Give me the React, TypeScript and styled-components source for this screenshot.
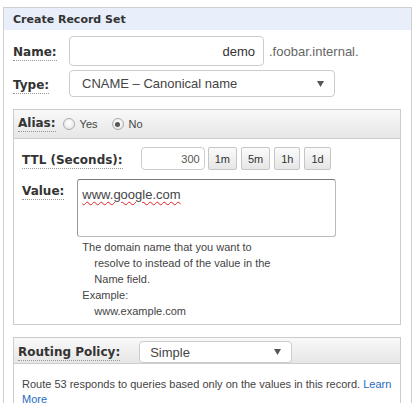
import React from "react";
import styled, { createGlobalStyle } from "styled-components";

const GlobalStyle = createGlobalStyle`
  html, body { margin: 0; padding: 0; background: #fff; }
  body { font-family: "Liberation Sans", Arial, sans-serif; color: #444; }
`;

const Page = styled.div`
  padding: 7px 6px 0 3px;
`;

const Panel = styled.section`
  border: 1px solid #d0d0d0;
  border-bottom: none;
  min-height: 400px;
`;

const PanelHeader = styled.header`
  height: 22px;
  display: flex;
  align-items: center;
  padding: 0 9px;
  background: #e8effa;
  font: bold 11px "DejaVu Sans", Verdana, sans-serif;
  color: #333;
`;

const PanelBody = styled.div`
  padding: 6px 10px 0 9px;
`;

const FieldRow = styled.div<{ $gap?: number; $top?: number; $align?: string }>`
  display: flex;
  align-items: ${(p) => p.$align || "center"};
  gap: ${(p) => p.$gap ?? 0}px;
  margin-top: ${(p) => p.$top ?? 0}px;
`;

const LabelCell = styled.div<{ $width?: number; $padTop?: number }>`
  width: ${(p) => (p.$width ? `${p.$width}px` : "auto")};
  padding-top: ${(p) => p.$padTop ?? 0}px;
  flex: none;
`;

const Label = styled.span`
  font: bold 12px "DejaVu Sans", Verdana, sans-serif;
  color: #333;
  border-bottom: 1px dotted #999;
  padding-bottom: 1px;
  white-space: nowrap;
`;

const NameInput = styled.div`
  box-sizing: border-box;
  width: 195px;
  height: 30px;
  border: 1px solid #ccc;
  border-radius: 4px;
  display: flex;
  align-items: center;
  justify-content: flex-end;
  padding-right: 8px;
  font-size: 13px;
  color: #333;
`;

const Suffix = styled.span`
  margin-left: 5px;
  font-size: 13px;
  color: #666;
`;

const SelectBox = styled.div<{ $width: number; $height: number; $pad: number }>`
  box-sizing: border-box;
  width: ${(p) => p.$width}px;
  height: ${(p) => p.$height}px;
  border: 1px solid #ccc;
  border-radius: 4px;
  background: #fff;
  display: flex;
  align-items: center;
  justify-content: space-between;
  padding: 0 10px 0 ${(p) => p.$pad}px;
  font-size: 13px;
  color: #444;
`;

const Arrow = () => (
  <svg width="7" height="6" viewBox="0 0 7 6">
    <path d="M0 0 H7 L3.5 6 Z" fill="#555" />
  </svg>
);

const SubBox = styled.div<{ $top: number }>`
  margin-top: ${(p) => p.$top}px;
  border: 1px solid #ccc;
`;

const SubHeader = styled.div<{ $height: number }>`
  height: ${(p) => p.$height}px;
  box-sizing: border-box;
  display: flex;
  align-items: center;
  padding-left: 4px;
  background: linear-gradient(#f9f9f9, #e6e6e6);
  border-bottom: 1px solid #ccc;
`;

const RoutingHeader = styled(SubHeader)`
  align-items: flex-end;
  gap: 19px;
  & > ${LabelCell} {
    align-self: center;
  }
`;

const RadioGroup = styled.label`
  display: flex;
  align-items: center;
  gap: 5px;
  font-size: 11px;
  color: #444;
  margin-left: 7px;
  & + & {
    margin-left: 14px;
  }
`;

const Radio = styled.span<{ $checked?: boolean }>`
  box-sizing: border-box;
  width: 12px;
  height: 12px;
  border-radius: 50%;
  border: 1px solid #aaa;
  background: radial-gradient(circle at 50% 40%, #fff, #e4e4e4);
  display: flex;
  align-items: center;
  justify-content: center;
  &::after {
    content: "";
    display: ${(p) => (p.$checked ? "block" : "none")};
    width: 5px;
    height: 5px;
    border-radius: 50%;
    background: #555;
  }
`;

const SubBody = styled.div`
  padding: 8px 8px 5px 8px;
`;

const TtlInput = styled.div`
  box-sizing: border-box;
  width: 64px;
  height: 23px;
  border: 1px solid #ccc;
  border-radius: 4px;
  display: flex;
  align-items: center;
  justify-content: flex-end;
  padding-right: 4px;
  font-size: 11px;
  color: #555;
`;

const ButtonGroup = styled.div`
  display: flex;
  gap: 4px;
  margin-left: 3px;
`;

const TtlButton = styled.button`
  box-sizing: border-box;
  height: 23px;
  padding: 0 6px;
  border: 1px solid #c6c6c6;
  border-radius: 2px;
  background: linear-gradient(#fbfbfb, #e6e6e6);
  font: 11px "Liberation Sans", Arial, sans-serif;
  color: #333;
`;

const ValueCol = styled.div`
  display: flex;
  flex-direction: column;
`;

const TextArea = styled.div`
  box-sizing: border-box;
  width: 259px;
  height: 58px;
  border: 1px solid #bbb;
  border-top-color: #777;
  border-left-color: #999;
  border-radius: 3px;
  padding: 7px 4px;
  font-size: 13px;
  color: #444;
`;

const Misspelled = styled.span`
  text-decoration: underline wavy #e02020;
  text-decoration-thickness: 1px;
  text-underline-offset: 2px;
`;

const HelpText = styled.div`
  width: 197px;
  margin: 2px 0 0 5px;
  font-size: 11px;
  line-height: 16px;
  color: #444;
`;

const HelpPara = styled.p<{ $indent?: boolean }>`
  margin: 0;
  padding-left: 12px;
  text-indent: ${(p) => (p.$indent ? "0" : "-12px")};
`;

const RoutingText = styled.p`
  margin: 0;
  padding: 13px 4px 0 8px;
  font-size: 11px;
  line-height: 15px;
  color: #444;
`;

const Link = styled.a`
  color: #1f6bbf;
  text-decoration: none;
`;

export default function App() {
  return (
    <>
      <GlobalStyle />
      <Page>
        <Panel>
          <PanelHeader>Create Record Set</PanelHeader>
          <PanelBody>
            <FieldRow>
              <LabelCell $width={56}>
                <Label>Name:</Label>
              </LabelCell>
              <NameInput>demo</NameInput>
              <Suffix>.foobar.internal.</Suffix>
            </FieldRow>
            <FieldRow $top={4}>
              <LabelCell $width={56}>
                <Label>Type:</Label>
              </LabelCell>
              <SelectBox $width={266} $height={27} $pad={12}>
                <span>CNAME – Canonical name</span>
                <Arrow />
              </SelectBox>
            </FieldRow>

            <SubBox $top={12}>
              <SubHeader $height={29}>
                <Label>Alias:</Label>
                <RadioGroup>
                  <Radio />
                  Yes
                </RadioGroup>
                <RadioGroup>
                  <Radio $checked />
                  No
                </RadioGroup>
              </SubHeader>
              <SubBody>
                <FieldRow $gap={18}>
                  <LabelCell>
                    <Label>TTL (Seconds):</Label>
                  </LabelCell>
                  <FieldRow>
                    <TtlInput>300</TtlInput>
                    <ButtonGroup>
                      <TtlButton>1m</TtlButton>
                      <TtlButton>5m</TtlButton>
                      <TtlButton>1h</TtlButton>
                      <TtlButton>1d</TtlButton>
                    </ButtonGroup>
                  </FieldRow>
                </FieldRow>
                <FieldRow $top={9} $gap={13} $align="flex-start">
                  <LabelCell $padTop={2}>
                    <Label>Value:</Label>
                  </LabelCell>
                  <ValueCol>
                    <TextArea>
                      <Misspelled>www.google.com</Misspelled>
                    </TextArea>
                    <HelpText>
                      <HelpPara>
                        The domain name that you want to resolve to instead of the value in the Name field.
                      </HelpPara>
                      <HelpPara>Example:</HelpPara>
                      <HelpPara $indent>www.example.com</HelpPara>
                    </HelpText>
                  </ValueCol>
                </FieldRow>
              </SubBody>
            </SubBox>

            <SubBox $top={12}>
              <RoutingHeader $height={26}>
                <LabelCell>
                  <Label>Routing Policy:</Label>
                </LabelCell>
                <SelectBox $width={153} $height={22} $pad={10}>
                  <span>Simple</span>
                  <Arrow />
                </SelectBox>
              </RoutingHeader>
              <RoutingText>
                Route 53 responds to queries based only on the values in this record.{" "}
                <Link href="#">Learn More</Link>
              </RoutingText>
            </SubBox>
          </PanelBody>
        </Panel>
      </Page>
    </>
  );
}
